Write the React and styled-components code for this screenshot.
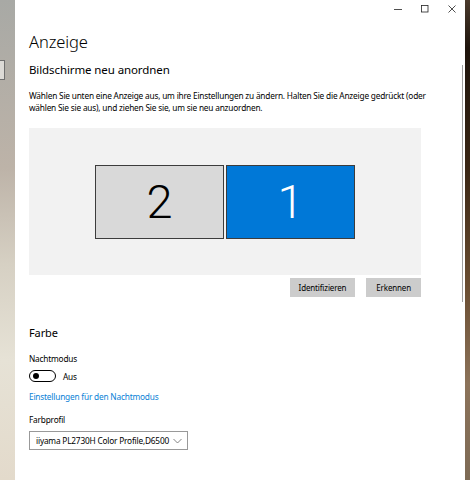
import React from "react";
import styled, { createGlobalStyle } from "styled-components";

const Global = createGlobalStyle`
  html, body {
    margin: 0;
    padding: 0;
  }
  body {
    font-family: "Noto Sans", "Open Sans", sans-serif;
    color: #000;
  }
`;

const Screen = styled.div`
  width: 470px;
  height: 480px;
  display: flex;
  overflow: hidden;
`;

const Desktop = styled.div`
  width: 15px;
  flex-shrink: 0;
  background: linear-gradient(180deg, #a8a9a5 0%, #bdb3a8 35%, #d6d0c3 55%, #e6e2d6 75%, #e3dacb 100%);
  padding-top: 60px;
  box-sizing: border-box;
`;

const DesktopBox = styled.div`
  width: 4px;
  height: 18px;
  border: 1px solid #6f6f6f;
  border-left: none;
  background: #dcdad6;
`;

const Wallpaper = styled.div`
  width: 5px;
  flex-shrink: 0;
  background: linear-gradient(180deg, #4a3a2c 0%, #1e140c 10%, #3a2614 35%, #6b4e32 60%, #8c735a 80%, #7d6a55 100%);
`;

const Window = styled.div`
  flex: 1;
  background: #fff;
  position: relative;
  display: flex;
  flex-direction: column;
`;

const TitleBar = styled.div`
  height: 18px;
  display: flex;
  justify-content: flex-end;
  align-items: center;
`;

const Control = styled.div`
  width: 27px;
  height: 18px;
  display: flex;
  align-items: center;
  justify-content: center;
`;

const Scrollbar = styled.div`
  position: absolute;
  right: 2px;
  top: 65px;
  width: 1.5px;
  height: 237px;
  background: #a0a0a0;
`;

const Content = styled.div`
  padding: 0 0 0 14px;
  display: flex;
  flex-direction: column;
`;

const Title = styled.h1`
  margin: 12px 0 0;
  font-size: 16.5px;
  font-weight: 300;
  line-height: 24px;
  letter-spacing: -0.1px;
`;

const SectionTitle = styled.h2`
  margin: ${(p) => p.$top}px 0 0;
  font-size: ${(p) => p.$size}px;
  font-weight: 400;
  line-height: 18px;
  letter-spacing: -0.1px;
`;

const Text = styled.p`
  margin: ${(p) => p.$top || 0}px 0 0;
  font-size: 8.3px;
  line-height: 12px;
  letter-spacing: -0.2px;
  color: ${(p) => p.$color || "#000"};
  width: 400px;
`;

const Arrange = styled.div`
  margin-top: 14px;
  width: 392px;
  height: 147px;
  background: #f2f2f2;
  display: flex;
  justify-content: center;
  align-items: center;
  gap: 2px;
`;

const Monitor = styled.div`
  width: 127px;
  height: 72px;
  border: 1px solid #3c3c3c;
  background: ${(p) => (p.$active ? "#0078d7" : "#d9d9d9")};
  color: ${(p) => (p.$active ? "#fff" : "#000")};
  display: flex;
  align-items: center;
  justify-content: center;
  font-family: Roboto, "Noto Sans", sans-serif;
  font-size: 47px;
  font-weight: 300;
  line-height: 1;
`;

const ButtonRow = styled.div`
  width: 392px;
  margin-top: 3px;
  display: flex;
  justify-content: flex-end;
  gap: 11px;
`;

const Button = styled.div`
  background: #cccccc;
  height: 19px;
  padding: 0 ${(p) => p.$pad}px;
  display: flex;
  align-items: center;
  font-size: 8px;
  letter-spacing: -0.15px;
`;

const ToggleRow = styled.div`
  margin-top: 5px;
  display: flex;
  align-items: center;
  gap: 7px;
  font-size: 8.3px;
  letter-spacing: -0.2px;
`;

const Toggle = styled.div`
  width: 22px;
  height: 10px;
  border: 1.5px solid #000;
  border-radius: 7px;
  display: flex;
  align-items: center;
  padding-left: 3px;
  &::before {
    content: "";
    width: 6px;
    height: 6px;
    border-radius: 50%;
    background: #000;
  }
`;

const Select = styled.div`
  margin-top: 5px;
  width: 146px;
  height: 17px;
  border: 1.5px solid #999;
  display: flex;
  align-items: center;
  justify-content: space-between;
  padding: 0 5px 0 6px;
  font-size: 8.3px;
  letter-spacing: -0.2px;
`;

export default function App() {
  return (
    <Screen>
      <Global />
      <Desktop>
        <DesktopBox />
      </Desktop>
      <Window>
        <TitleBar>
          <Control>
            <svg width="8" height="8" viewBox="0 0 8 8">
              <path d="M0 4.5h8" stroke="#222" strokeWidth="0.8" />
            </svg>
          </Control>
          <Control>
            <svg width="8" height="8" viewBox="0 0 8 8">
              <rect x="0.5" y="0.5" width="6.5" height="6.5" fill="none" stroke="#222" strokeWidth="0.8" />
            </svg>
          </Control>
          <Control>
            <svg width="8" height="8" viewBox="0 0 8 8">
              <path d="M0.5 0.5l7 7M7.5 0.5l-7 7" stroke="#222" strokeWidth="0.8" />
            </svg>
          </Control>
        </TitleBar>
        <Scrollbar />
        <Content>
          <Title>Anzeige</Title>
          <SectionTitle $top={7} $size={11.5}>Bildschirme neu anordnen</SectionTitle>
          <Text $top={11}>
            Wählen Sie unten eine Anzeige aus, um ihre Einstellungen zu ändern. Halten Sie die Anzeige gedrückt (oder
            wählen Sie sie aus), und ziehen Sie sie, um sie neu anzuordnen.
          </Text>
          <Arrange>
            <Monitor>2</Monitor>
            <Monitor $active>1</Monitor>
          </Arrange>
          <ButtonRow>
            <Button $pad={9}>Identifizieren</Button>
            <Button $pad={10}>Erkennen</Button>
          </ButtonRow>
          <SectionTitle $top={27} $size={11}>Farbe</SectionTitle>
          <Text $top={11}>Nachtmodus</Text>
          <ToggleRow>
            <Toggle />
            Aus
          </ToggleRow>
          <Text $top={9} $color="#0a7fd6">Einstellungen für den Nachtmodus</Text>
          <Text $top={11}>Farbprofil</Text>
          <Select>
            iiyama PL2730H Color Profile,D6500
            <svg width="9" height="6" viewBox="0 0 9 6">
              <path d="M0.5 1l4 4 4-4" fill="none" stroke="#666" strokeWidth="0.8" />
            </svg>
          </Select>
        </Content>
      </Window>
      <Wallpaper />
    </Screen>
  );
}
